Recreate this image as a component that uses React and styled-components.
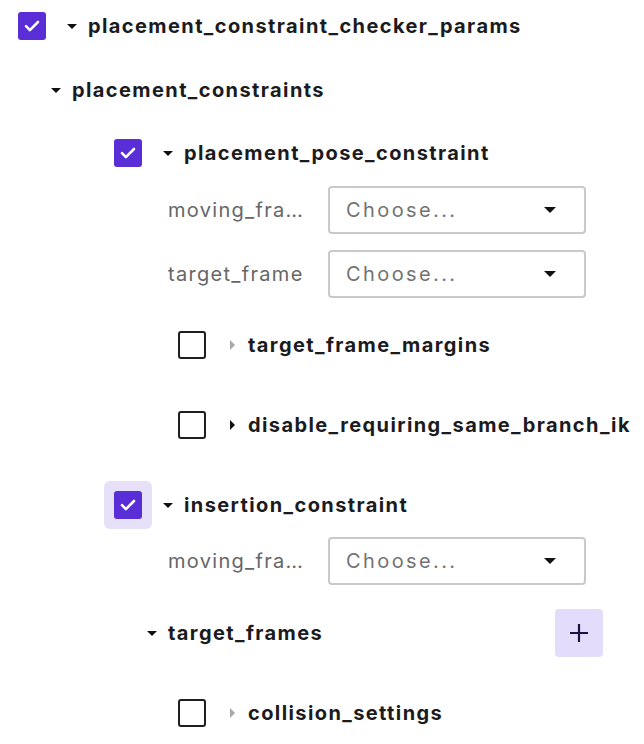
import React from "react";
import styled, { createGlobalStyle } from "styled-components";

const GlobalStyle = createGlobalStyle`
  body {
    margin: 0;
    background: #ffffff;
    font-family: Inter, "Liberation Sans", sans-serif;
    color: #1d1d1f;
  }
`;

// Page container
const Tree = styled.div`
  padding: 2px 0 0 8px;
  display: flex;
  flex-direction: column;
`;

// Children of a node, indented from the parent header
const Children = styled.div`
  display: flex;
  flex-direction: column;
  padding-left: ${(p) => p.indent}px;
`;

const Header = styled.div`
  display: flex;
  align-items: center;
  height: 48px;
  margin-top: ${(p) => p.top || 0}px;
  margin-left: ${(p) => p.shift || 0}px;
  width: ${(p) => (p.width ? `${p.width}px` : "auto")};
`;

const CheckWrap = styled.div`
  width: 48px;
  height: 48px;
  display: flex;
  align-items: center;
  justify-content: center;
  border-radius: 6px;
  background: ${(p) => (p.hover ? "#e6e0f9" : "transparent")};
`;

const Box = styled.div`
  width: 28px;
  height: 28px;
  box-sizing: border-box;
  border-radius: 3px;
  display: flex;
  align-items: center;
  justify-content: center;
  background: ${(p) => (p.checked ? "#5a2ed7" : "#ffffff")};
  border: ${(p) => (p.checked ? "none" : "2px solid #1f1f1f")};
`;

const CaretBox = styled.div`
  width: 32px;
  height: 48px;
  display: flex;
  align-items: center;
  justify-content: center;
`;

const CaretDown = styled.div`
  width: 0;
  height: 0;
  border-left: 5px solid transparent;
  border-right: 5px solid transparent;
  border-top: 5px solid #111;
`;

const CaretRight = styled.div`
  width: 0;
  height: 0;
  border-top: 5px solid transparent;
  border-bottom: 5px solid transparent;
  border-left: 5px solid ${(p) => (p.muted ? "#a8a8a8" : "#111")};
`;

const Title = styled.span`
  font-size: 20px;
  font-weight: 700;
  letter-spacing: 1.4px;
  color: #1b1b1d;
  white-space: nowrap;
  flex: 1;
`;

const AddButton = styled.button`
  width: 48px;
  height: 48px;
  border: none;
  border-radius: 4px;
  background: #e3dcfa;
  display: flex;
  align-items: center;
  justify-content: center;
  padding: 0;
  cursor: pointer;
`;

const FieldRow = styled.div`
  display: flex;
  align-items: center;
  height: 48px;
  gap: 16px;
  margin-top: ${(p) => p.top || 0}px;
`;

// labels are cut with an ellipsis, as in the form this mirrors
const FieldLabel = styled.span`
  width: 144px;
  font-size: 20px;
  letter-spacing: 1.3px;
  color: #666;
  white-space: nowrap;
  overflow: hidden;
  text-overflow: ellipsis;
`;

const Select = styled.div`
  width: 258px;
  height: 48px;
  box-sizing: border-box;
  border: 2px solid #c9c9c9;
  border-radius: 4px;
  display: flex;
  align-items: center;
  justify-content: space-between;
  padding: 0 28px 0 16px;
  font-size: 20px;
  color: #737373;
  letter-spacing: 2.4px;
`;

const SelectCaret = styled.div`
  width: 0;
  height: 0;
  border-left: 6px solid transparent;
  border-right: 6px solid transparent;
  border-top: 6px solid #111;
`;

function Check() {
  return (
    <svg width="20" height="20" viewBox="0 0 20 20" fill="none">
      <path
        d="M4 10.2l3.9 3.9 8.1-8.1"
        stroke="#fff"
        strokeWidth="2.6"
        strokeLinecap="round"
        strokeLinejoin="round"
      />
    </svg>
  );
}

function Checkbox({ checked, hover }) {
  return (
    <CheckWrap hover={hover}>
      <Box checked={checked}>{checked && <Check />}</Box>
    </CheckWrap>
  );
}

function Field({ label, top }) {
  return (
    <FieldRow top={top}>
      <FieldLabel title={label}>{label}</FieldLabel>
      <Select>
        <span>Choose...</span>
        <SelectCaret />
      </Select>
    </FieldRow>
  );
}

function Node({ title, checkbox, checked, hover, open, muted, top, shift, width, action }) {
  return (
    <Header top={top} shift={shift} width={width}>
      {checkbox && <Checkbox checked={checked} hover={hover} />}
      <CaretBox>{open ? <CaretDown /> : <CaretRight muted={muted} />}</CaretBox>
      <Title>{title}</Title>
      {action}
    </Header>
  );
}

export default function App() {
  return (
    <>
      <GlobalStyle />
      <Tree>
        <Node title="placement_constraint_checker_params" checkbox checked open />
        <Children indent={32}>
          <Node title="placement_constraints" open top={16} />
          <Children indent={64}>
            <Node title="placement_pose_constraint" checkbox checked open top={15} />
            <Children indent={64}>
              <Field label="moving_frame" top={9} />
              <Field label="target_frame" top={16} />
              <Node title="target_frame_margins" checkbox muted top={23} />
              <Node title="disable_requiring_same_branch_ik" checkbox top={32} />
            </Children>
            <Node title="insertion_constraint" checkbox checked hover open top={32} />
            <Children indent={64}>
              <Field label="moving_frame" top={8} />
              <Node
                title="target_frames"
                open
                top={24}
                shift={-32}
                width={467}
                action={
                  <AddButton>
                    <svg width="22" height="22" viewBox="0 0 22 22" fill="none">
                      <path d="M11 2v18M2 11h18" stroke="#1e1147" strokeWidth="2.2" />
                    </svg>
                  </AddButton>
                }
              />
              <Node title="collision_settings" checkbox muted top={32} />
            </Children>
          </Children>
        </Children>
      </Tree>
    </>
  );
}
